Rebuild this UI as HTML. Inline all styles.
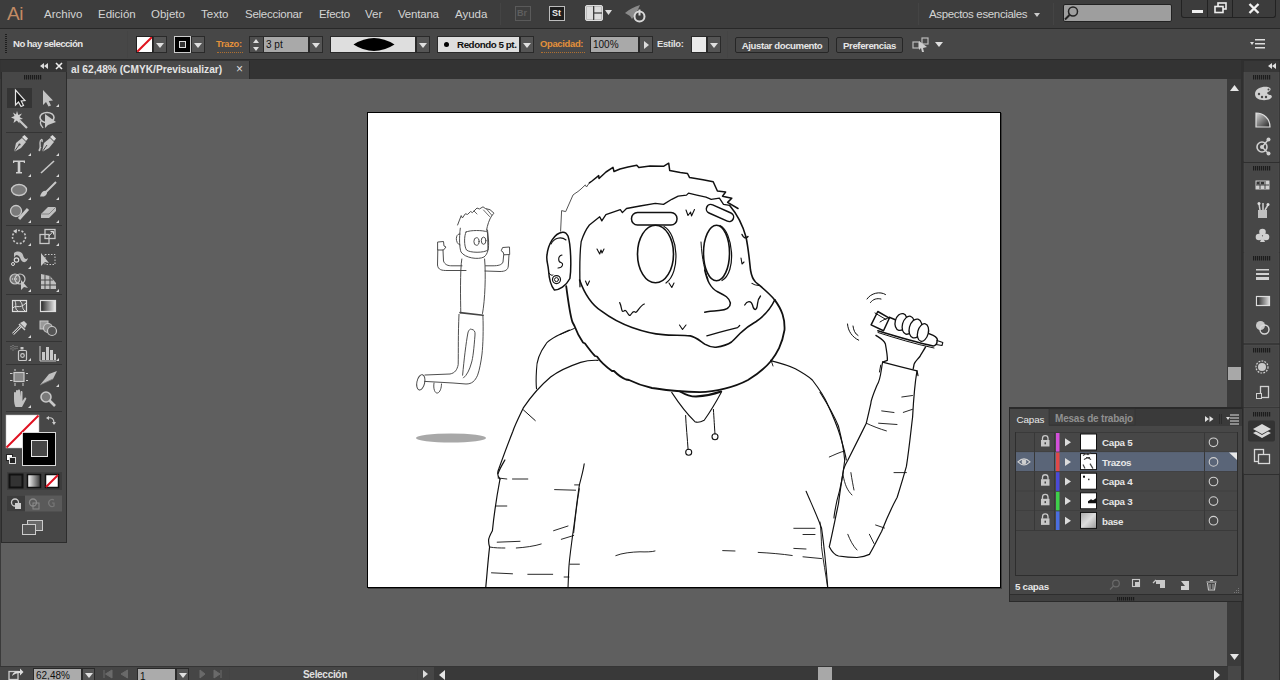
<!DOCTYPE html>
<html><head><meta charset="utf-8">
<style>
*{margin:0;padding:0;box-sizing:border-box}
html,body{width:1280px;height:680px;overflow:hidden;background:#5f5f5f;font-family:"Liberation Sans",sans-serif}
div,span,svg{position:absolute}
#menubar{left:0;top:0;width:1280px;height:28px;background:#3d3d3d}
#ctrl{left:0;top:28px;width:1280px;height:32px;background:#474747;border-top:1px solid #282828;border-bottom:1px solid #2a2a2a}
#tabbar{left:0;top:60px;width:1242px;height:19px;background:#333333}
#canvas{left:0;top:79px;width:1227px;height:587px;background:#5f5f5f;border-left:1px solid #3a3a3a}
#status{left:0;top:666px;width:434px;height:14px;background:#464646;border-top:1px solid #353535}
#hscroll{left:434px;top:666px;width:794px;height:14px;background:#393939;border-top:1px solid #353535}
#toolbar{left:1px;top:60px;width:66px;height:483px;background:#474747;border:1px solid #2c2c2c}
#vscroll{left:1227px;top:79px;width:14px;height:587px;background:#3b3b3b}
#dock{left:1241px;top:60px;width:39px;height:620px;background:#2e2e2e}
#artboard{left:367px;top:112px;width:634px;height:476px;background:#fff;border:1px solid #000;box-shadow:1px 1px 0 rgba(0,0,0,.35)}
#layers{left:1009px;top:407px;width:234px;height:195px;background:#474747;border:1px solid #252525}
.mt{color:#d4d4d4;font-size:11.5px;top:8px;white-space:nowrap}
.sep{width:1px;background:#2a2a2a;border-right:1px solid #444}
.lbl{font-size:10px;white-space:nowrap}
.inp{background:#d5d5d5;border:1px solid #2a2a2a}
.dd{background:#555;border:1px solid #2a2a2a}
.tri{width:0;height:0;border-left:4px solid transparent;border-right:4px solid transparent;border-top:5px solid #e0e0e0}
.btn{background:#484848;border:1px solid #262626;border-radius:2px;color:#e6e6e6;font-size:9.6px;font-weight:bold;letter-spacing:-0.4px;white-space:nowrap;text-align:center;line-height:15px}
</style></head><body>
<div id="canvas"></div>
<div id="menubar">
  <span style="left:7px;top:3px;font-size:19px;color:#c38b64;letter-spacing:-0.5px">Ai</span>
  <span class="mt" style="left:44px">Archivo</span>
  <span class="mt" style="left:98px">Edición</span>
  <span class="mt" style="left:151px">Objeto</span>
  <span class="mt" style="left:201px">Texto</span>
  <span class="mt" style="left:245px;letter-spacing:-0.25px">Seleccionar</span>
  <span class="mt" style="left:319px;letter-spacing:-0.3px">Efecto</span>
  <span class="mt" style="left:365px">Ver</span>
  <span class="mt" style="left:398px;letter-spacing:-0.2px">Ventana</span>
  <span class="mt" style="left:455px">Ayuda</span>
  <div class="sep" style="left:500px;top:3px;height:22px"></div>
  <div class="sep" style="left:918px;top:3px;height:22px"></div>
  <div class="sep" style="left:1053px;top:3px;height:22px"></div>
  <span class="mt" style="left:929px;letter-spacing:-0.35px">Aspectos esenciales</span>
  <div class="tri" style="left:1034px;top:13px;border-width:3px 3px 0 3px;border-top:4px solid #ccc"></div>
  <div style="left:1063px;top:4px;width:109px;height:18px;background:#9e9e9e;border:1px solid #222;border-radius:2px"></div>
  <div style="left:1181px;top:0;width:95px;height:18px;background:#3c3c3c;border:1px solid #222;border-top:none;border-radius:0 0 3px 3px"></div>
  <div style="left:1207px;top:0;width:1px;height:18px;background:#222"></div>
  <div style="left:1232px;top:0;width:1px;height:18px;background:#222"></div>
  <div style="left:515px;top:6px;width:16px;height:15px;border:1px solid #5a5a5a;background:#3e3e3e"><span style="left:1px;top:1px;font-size:9px;font-weight:bold;color:#5e5e5e">Br</span></div>
  <div style="left:549px;top:6px;width:16px;height:15px;border:1px solid #bdbdbd;background:#1e1e1e"><span style="left:2px;top:1px;font-size:9px;font-weight:bold;color:#e8e8e8">St</span></div>
  <svg style="left:585px;top:5px" width="28" height="16" viewBox="0 0 28 16"><rect x="0.5" y="0.5" width="17" height="15" rx="1.5" fill="#bbb" stroke="#ddd"/><rect x="2" y="2" width="6" height="12" fill="#ddd"/><rect x="9.5" y="2" width="6.5" height="5.5" fill="#ddd"/><rect x="9.5" y="8.5" width="6.5" height="5.5" fill="#ddd"/><rect x="8.2" y="1" width="1" height="14" fill="#222"/><rect x="9" y="7.5" width="8" height="1" fill="#222"/><path d="M20 5 L27 5 L23.5 10Z" fill="#ddd"/></svg>
  <svg style="left:624px;top:4px" width="24" height="19" viewBox="0 0 24 19"><path d="M1 9 C6 5 10 3 16 1 C14 6 12 10 8 15 L6 12 Z" fill="#8a8a8a"/><circle cx="15.5" cy="12.5" r="5" fill="none" stroke="#d8d8d8" stroke-width="2"/><rect x="14.5" y="5.5" width="2" height="6" fill="#d8d8d8"/></svg>
  <svg style="left:1064px;top:5px" width="16" height="16" viewBox="0 0 16 16"><circle cx="9" cy="6.5" r="4.5" fill="none" stroke="#222" stroke-width="1.5"/><path d="M5.5 10 L1 14.5" stroke="#222" stroke-width="2"/></svg>
  <div style="left:1192px;top:10px;width:11px;height:3px;background:#f0f0f0"></div>
  <svg style="left:1214px;top:2px" width="14" height="12" viewBox="0 0 14 12"><rect x="4" y="1" width="8" height="6" fill="none" stroke="#eee" stroke-width="1.6"/><rect x="1" y="4.5" width="8" height="6" fill="#3c3c3c" stroke="#eee" stroke-width="1.6"/></svg>
  <svg style="left:1248px;top:3px" width="12" height="11" viewBox="0 0 12 11"><path d="M1.5 1 L10.5 10 M10.5 1 L1.5 10" stroke="#f2f2f2" stroke-width="2.4"/></svg>
</div>
<div id="ctrl">
  <div style="left:5px;top:5px;width:2px;height:20px;background:repeating-linear-gradient(#1e1e1e 0 1px,transparent 1px 2px)"></div>
  <span class="lbl" style="left:13px;top:9px;color:#e6e6e6;font-weight:bold;font-size:9.6px;letter-spacing:-0.55px">No hay selección</span>
  <div class="sep" style="left:127px;top:2px;height:27px"></div>
  <div style="left:136px;top:7px;width:17px;height:17px;background:#fff;border:1px solid #222;overflow:hidden"><div style="left:-3px;top:6px;width:22px;height:2px;background:#e0141e;transform:rotate(-45deg)"></div></div>
  <div class="dd" style="left:153px;top:7px;width:14px;height:17px"><div class="tri" style="left:2px;top:6px"></div></div>
  <div style="left:174px;top:7px;width:17px;height:17px;background:#000;border:1px solid #ccc"><div style="left:4px;top:4px;width:7px;height:7px;border:1.5px solid #ddd;background:#333"></div></div>
  <div class="dd" style="left:191px;top:7px;width:14px;height:17px"><div class="tri" style="left:2px;top:6px"></div></div>
  <span class="lbl" style="left:216px;top:9px;color:#e4913a;font-weight:bold;font-size:9.4px;letter-spacing:-0.3px">Trazo:</span>
  <div style="left:217px;top:23px;width:26px;height:1px;border-top:1px dotted #b07030"></div>
  <div class="dd" style="left:249px;top:7px;width:15px;height:17px;background:#4e4e4e"><div class="tri" style="left:3px;top:2px;border-top:none;border-bottom:4px solid #ddd;border-left-width:3.5px;border-right-width:3.5px"></div><div class="tri" style="left:3px;top:10px;border-top-width:4px;border-left-width:3.5px;border-right-width:3.5px"></div></div>
  <div class="inp" style="left:264px;top:7px;width:45px;height:17px;background:#a9a9a9;border-left:none"><span class="lbl" style="left:2px;top:2px;color:#111;font-size:10px">3 pt</span></div>
  <div class="dd" style="left:309px;top:7px;width:14px;height:17px"><div class="tri" style="left:2px;top:6px"></div></div>
  <div class="inp" style="left:330px;top:7px;width:86px;height:17px;background:#dedede"><svg style="left:22px;top:1px" width="42" height="13" viewBox="0 0 42 13"><path d="M0.5 6.5 Q21 -6.5 41.5 6.5 Q21 19.5 0.5 6.5Z" fill="#000"/></svg></div>
  <div class="dd" style="left:416px;top:7px;width:14px;height:17px"><div class="tri" style="left:2px;top:6px"></div></div>
  <div class="inp" style="left:437px;top:7px;width:83px;height:17px;background:#dedede"><div style="left:6px;top:5px;width:5px;height:5px;border-radius:50%;background:#000"></div><span class="lbl" style="left:19px;top:2px;color:#111;font-size:9.8px;font-weight:bold;letter-spacing:-0.45px">Redondo 5 pt.</span></div>
  <div class="dd" style="left:520px;top:7px;width:14px;height:17px"><div class="tri" style="left:2px;top:6px"></div></div>
  <span class="lbl" style="left:540px;top:9px;color:#e4913a;font-weight:bold;font-size:9.4px;letter-spacing:-0.3px">Opacidad:</span>
  <div style="left:541px;top:23px;width:44px;height:1px;border-top:1px dotted #b07030"></div>
  <div class="inp" style="left:590px;top:7px;width:49px;height:17px;background:#a9a9a9"><span class="lbl" style="left:2px;top:2px;color:#111;font-size:10px">100%</span></div>
  <div class="dd" style="left:639px;top:7px;width:14px;height:17px"><div class="tri" style="left:4px;top:4px;border-top:4px solid transparent;border-bottom:4px solid transparent;border-left:5px solid #ddd;border-right:none"></div></div>
  <span class="lbl" style="left:657px;top:9px;color:#e0e0e0;font-weight:bold;font-size:9.4px;letter-spacing:-0.3px">Estilo:</span>
  <div style="left:691px;top:7px;width:16px;height:17px;background:#eaeaea;border:1px solid #2a2a2a"></div>
  <div class="dd" style="left:707px;top:7px;width:14px;height:17px"><div class="tri" style="left:2px;top:6px"></div></div>
  <div class="sep" style="left:727px;top:2px;height:27px"></div>
  <div class="btn" style="left:735px;top:8px;width:94px;height:16px">Ajustar documento</div>
  <div class="btn" style="left:836px;top:8px;width:67px;height:16px">Preferencias</div>
  <svg style="left:912px;top:8px" width="18" height="16" viewBox="0 0 18 16"><rect x="1" y="5" width="6" height="6" fill="none" stroke="#bbb" stroke-width="1.2"/><rect x="10" y="1" width="6" height="6" fill="none" stroke="#bbb" stroke-width="1.2"/><path d="M7 4 L15 10 L11 11 L12 15 L10 15 L9 11 L7 13Z" fill="#ccc"/></svg>
  <div class="tri" style="left:935px;top:13px"></div>
  <svg style="left:1250px;top:10px" width="15" height="10" viewBox="0 0 15 10"><path d="M0 3 L4 3 L2 6Z" fill="#ddd"/><rect x="5" y="0" width="10" height="1.5" fill="#ddd"/><rect x="5" y="4" width="10" height="1.5" fill="#ddd"/><rect x="5" y="8" width="10" height="1.5" fill="#ddd"/></svg>
</div>
<div id="tabbar">
  <div style="left:67px;top:1px;width:183px;height:18px;background:#494949;border-right:1px solid #2a2a2a"></div>
  <span style="left:71px;top:4px;font-size:10.2px;font-weight:bold;color:#e4e4e4;white-space:nowrap">al 62,48% (CMYK/Previsualizar)</span>
  <span style="left:236px;top:2px;font-size:12px;color:#ddd">×</span>
</div>
<div id="vscroll"></div>
<div id="status">
  <svg style="left:8px;top:1px" width="16" height="12" viewBox="0 0 16 12"><rect x="1" y="3.5" width="9" height="8" fill="none" stroke="#ccc" stroke-width="1.3"/><path d="M4 8 C5 4 8 3 12 3 L12 0.5 L15.5 4 L12 7.5 L12 5 C9 5 6 6 4 8Z" fill="#ddd"/></svg>
  <div style="left:33px;top:1px;width:49px;height:14px;background:#ababab;border:1px solid #2a2a2a"><span style="left:2px;top:1px;font-size:10px;color:#111">62,48%</span></div>
  <div class="dd" style="left:82px;top:1px;width:13px;height:14px"><div class="tri" style="left:2px;top:4px;border-top-width:5px;border-left-width:4px;border-right-width:4px"></div></div>
  <svg style="left:100px;top:1px" width="130" height="13" viewBox="100 667 130 13"><path d="M104 669 V677 M112 669 L105.5 673 L112 677Z M127.5 669 L121 673 L127.5 677Z" fill="#6a6a6a" stroke="#6a6a6a" stroke-width="1"/><path d="M200 669 L205 673 L200 677Z M214 669 L220 673 L214 677Z M221 669 V677" fill="#6a6a6a" stroke="#6a6a6a" stroke-width="1"/></svg>
  <div style="left:137px;top:1px;width:39px;height:14px;background:#ababab;border:1px solid #2a2a2a"><span style="left:2px;top:2px;font-size:10px;color:#111">1</span></div>
  <div class="dd" style="left:176px;top:1px;width:13px;height:14px"><div class="tri" style="left:2px;top:4px;border-top-width:5px;border-left-width:4px;border-right-width:4px"></div></div>
  <div class="sep" style="left:229px;top:1px;height:13px"></div>
  <span style="left:303px;top:2px;font-size:10px;font-weight:bold;color:#e0e0e0;letter-spacing:-0.3px">Selección</span>
  <div class="sep" style="left:417px;top:1px;height:13px"></div>
  <div class="tri" style="left:423px;top:3px;border-top:4px solid transparent;border-bottom:4px solid transparent;border-left:5px solid #ddd;border-right:none"></div>
</div>
<div id="hscroll">
  <div class="tri" style="left:5px;top:3px;border-top:5px solid transparent;border-bottom:5px solid transparent;border-right:6px solid #e6e6e6;border-left:none"></div>
  <div style="left:384px;top:0px;width:14px;height:14px;background:#a8a8a8"></div>
  <div class="tri" style="left:780px;top:3px;border-top:5px solid transparent;border-bottom:5px solid transparent;border-left:6px solid #e6e6e6;border-right:none"></div>
</div>
<svg style="left:1227px;top:60px" width="53" height="620" viewBox="1227 60 53 620">
<defs><linearGradient id="gr3" x1="0" x2="1"><stop offset="0" stop-color="#222"/><stop offset="1" stop-color="#ddd"/></linearGradient>
<linearGradient id="gr4" x1="0" y1="0" x2="1" y2="1"><stop offset="0" stop-color="#d8d8d8"/><stop offset="1" stop-color="#222"/></linearGradient></defs>
<path d="M1230 91 L1234.5 85 L1239 91Z" fill="#e6e6e6"/>
<rect x="1228" y="367" width="13" height="13" fill="#a8a8a8"/>
<path d="M1230 654 L1239 654 L1234.5 660Z" fill="#e6e6e6"/>
<rect x="1241" y="60" width="39" height="620" fill="#2f2f2f"/>
<rect x="1244" y="61" width="35" height="11" fill="#373737"/>
<path d="M1268 66 L1272 63 L1272 69Z M1272 66 L1276 63 L1276 69Z" fill="#e0e0e0"/>
<g fill="#474747" stroke="#555" stroke-width="0.5">
<rect x="1244" y="72.5" width="35" height="89"/>
<rect x="1244" y="163.5" width="35" height="89"/>
<rect x="1244" y="253.5" width="35" height="89.5"/>
<rect x="1244" y="345" width="35" height="62"/>
<rect x="1244" y="408.5" width="35" height="65"/>
</g>
<rect x="1244" y="475" width="35" height="205" fill="#474747"/>
<g fill="#1c1c1c"><rect x="1253" y="75" width="1.2" height="4.5"/><rect x="1255" y="75" width="1.2" height="4.5"/><rect x="1257" y="75" width="1.2" height="4.5"/><rect x="1259" y="75" width="1.2" height="4.5"/><rect x="1261" y="75" width="1.2" height="4.5"/><rect x="1263" y="75" width="1.2" height="4.5"/><rect x="1265" y="75" width="1.2" height="4.5"/><rect x="1267" y="75" width="1.2" height="4.5"/><rect x="1269" y="75" width="1.2" height="4.5"/><rect x="1253" y="166" width="1.2" height="4.5"/><rect x="1255" y="166" width="1.2" height="4.5"/><rect x="1257" y="166" width="1.2" height="4.5"/><rect x="1259" y="166" width="1.2" height="4.5"/><rect x="1261" y="166" width="1.2" height="4.5"/><rect x="1263" y="166" width="1.2" height="4.5"/><rect x="1265" y="166" width="1.2" height="4.5"/><rect x="1267" y="166" width="1.2" height="4.5"/><rect x="1269" y="166" width="1.2" height="4.5"/><rect x="1253" y="256" width="1.2" height="4.5"/><rect x="1255" y="256" width="1.2" height="4.5"/><rect x="1257" y="256" width="1.2" height="4.5"/><rect x="1259" y="256" width="1.2" height="4.5"/><rect x="1261" y="256" width="1.2" height="4.5"/><rect x="1263" y="256" width="1.2" height="4.5"/><rect x="1265" y="256" width="1.2" height="4.5"/><rect x="1267" y="256" width="1.2" height="4.5"/><rect x="1269" y="256" width="1.2" height="4.5"/><rect x="1253" y="348" width="1.2" height="4.5"/><rect x="1255" y="348" width="1.2" height="4.5"/><rect x="1257" y="348" width="1.2" height="4.5"/><rect x="1259" y="348" width="1.2" height="4.5"/><rect x="1261" y="348" width="1.2" height="4.5"/><rect x="1263" y="348" width="1.2" height="4.5"/><rect x="1265" y="348" width="1.2" height="4.5"/><rect x="1267" y="348" width="1.2" height="4.5"/><rect x="1269" y="348" width="1.2" height="4.5"/><rect x="1253" y="412" width="1.2" height="4.5"/><rect x="1255" y="412" width="1.2" height="4.5"/><rect x="1257" y="412" width="1.2" height="4.5"/><rect x="1259" y="412" width="1.2" height="4.5"/><rect x="1261" y="412" width="1.2" height="4.5"/><rect x="1263" y="412" width="1.2" height="4.5"/><rect x="1265" y="412" width="1.2" height="4.5"/><rect x="1267" y="412" width="1.2" height="4.5"/><rect x="1269" y="412" width="1.2" height="4.5"/></g>
<!-- palette -->
<path d="M1255 94 C1255 88 1263 86 1268 87 C1272 88 1271 91 1268 92 C1266 93 1268 95 1270 95 C1272 95 1273 97 1270 99 C1266 101 1255 101 1255 94Z" fill="#d0d0d0"/>
<circle cx="1259" cy="94" r="1.2" fill="#474747"/><circle cx="1262" cy="97" r="1.2" fill="#474747"/><circle cx="1266" cy="97" r="1.2" fill="#474747"/><circle cx="1268.5" cy="89.5" r="1" fill="#474747"/>
<!-- gradient quarter -->
<path d="M1256 127 L1256 113 C1264 113 1270 119 1270 127Z" fill="url(#gr4)" stroke="#ddd" stroke-width="1.2"/>
<!-- color guide -->
<circle cx="1262" cy="147" r="5" fill="none" stroke="#d0d0d0" stroke-width="1.6"/><circle cx="1262" cy="147" r="2" fill="#d0d0d0"/>
<path d="M1262 147 L1268 140 M1262 147 L1268 153" stroke="#d0d0d0" stroke-width="1.4"/>
<circle cx="1268.5" cy="139.5" r="2" fill="#d0d0d0"/><circle cx="1268.5" cy="153.5" r="2" fill="#d0d0d0"/>
<!-- swatches -->
<rect x="1255.5" y="180.5" width="14" height="9" fill="#d0d0d0"/>
<path d="M1260 181 V189 M1265 181 V189 M1256 185 H1269" stroke="#474747" stroke-width="1"/>
<rect x="1256.5" y="181.5" width="3" height="3" fill="#333"/><rect x="1261" y="181.5" width="3" height="3" fill="#333"/>
<!-- brushes -->
<rect x="1258" y="210" width="9" height="8" fill="#c0c0c0"/>
<path d="M1260 210 L1259 204 M1263 210 L1263 203 M1265 210 L1268 205" stroke="#d0d0d0" stroke-width="1.5"/>
<circle cx="1259" cy="203.5" r="1.5" fill="#ddd"/><circle cx="1268" cy="204.5" r="1.5" fill="#ddd"/>
<!-- symbols club -->
<circle cx="1262.5" cy="232" r="3.3" fill="#d0d0d0"/><circle cx="1259" cy="237" r="3.3" fill="#d0d0d0"/><circle cx="1266" cy="237" r="3.3" fill="#d0d0d0"/>
<path d="M1262.5 236 L1260 242 H1265Z" fill="#d0d0d0"/>
<!-- stroke lines -->
<rect x="1256" y="269" width="13" height="1.5" fill="#d0d0d0"/><rect x="1256" y="273" width="13" height="2" fill="#d0d0d0"/><rect x="1256" y="277" width="13" height="3" fill="#d0d0d0"/>
<!-- gradient rect -->
<rect x="1256.5" y="296.5" width="13" height="9" fill="url(#gr3)" stroke="#ddd" stroke-width="1.2"/>
<!-- transparency -->
<circle cx="1260.5" cy="325.5" r="4.5" fill="#c8c8c8"/><circle cx="1264.5" cy="329.5" r="4.5" fill="none" stroke="#d8d8d8" stroke-width="1.4"/>
<!-- appearance -->
<circle cx="1262" cy="367" r="6" fill="none" stroke="#d0d0d0" stroke-width="1.2" stroke-dasharray="1.8 1.2"/><circle cx="1262" cy="367" r="4" fill="#c8c8c8"/>
<!-- transform -->
<rect x="1260.5" y="386.5" width="8" height="11" fill="none" stroke="#d0d0d0" stroke-width="1.3"/>
<rect x="1256.5" y="393.5" width="5" height="5" fill="#474747" stroke="#d0d0d0" stroke-width="1"/>
<!-- layers selected -->
<rect x="1248" y="420.5" width="27" height="21" rx="2" fill="#333"/>
<path d="M1253 429 L1262 424 L1271 429 L1262 434Z" fill="#d8d8d8"/>
<path d="M1253 433 L1256 431.5 L1262 435 L1268 431.5 L1271 433 L1262 438Z" fill="#d8d8d8"/>
<!-- artboards -->
<rect x="1254.5" y="449.5" width="9" height="12" fill="none" stroke="#d8d8d8" stroke-width="1.3"/>
<rect x="1258.5" y="454.5" width="11" height="9" fill="#474747" stroke="#d8d8d8" stroke-width="1.3"/>
<!-- status corner -->
<rect x="1228" y="666" width="13" height="14" fill="#474747"/>
</svg>

<div id="toolbar"></div>
<svg style="left:0;top:0" width="68" height="545" viewBox="0 0 68 545">
<defs><linearGradient id="gr1" x1="0" x2="1"><stop offset="0" stop-color="#222"/><stop offset="1" stop-color="#eee"/></linearGradient>
<linearGradient id="gr2" x1="0" x2="1"><stop offset="0" stop-color="#fff"/><stop offset="1" stop-color="#333"/></linearGradient></defs>
<rect x="1" y="60" width="66" height="12" fill="#353535"/>
<path d="M40 66 L44 63 L44 69Z M44 66 L48 63 L48 69Z" fill="#ddd"/>
<path d="M56 63 L62 69 M62 63 L56 69" stroke="#eee" stroke-width="1.6"/>
<g fill="#1c1c1c"><rect x="24" y="75" width="1.2" height="4.5"/><rect x="26" y="75" width="1.2" height="4.5"/><rect x="28" y="75" width="1.2" height="4.5"/><rect x="30" y="75" width="1.2" height="4.5"/><rect x="32" y="75" width="1.2" height="4.5"/><rect x="34" y="75" width="1.2" height="4.5"/><rect x="36" y="75" width="1.2" height="4.5"/><rect x="38" y="75" width="1.2" height="4.5"/><rect x="40" y="75" width="1.2" height="4.5"/></g>
<g fill="none" stroke="#343434" stroke-width="1">
<path d="M6 132.5 H62 M6 225.5 H62 M6 294.5 H62 M6 341.5 H62 M6 364.5 H62 M6 411.5 H62"/>
</g>
<rect x="7" y="88" width="25" height="20" fill="#343434"/>
<!-- row1 -->
<path d="M15.5 90 L15.5 105 L18.5 102 L21 106.5 L23.5 105.5 L21.2 101 L25 100.5Z" fill="#1a1a1a" stroke="#e6e6e6" stroke-width="1.2"/>
<path d="M43 90 L43 105 L46 102 L48.5 106.5 L51 105.5 L48.7 101 L53 100.5Z" fill="#c4c4c4"/>
<!-- row2 wand -->
<path d="M17 118 L27 128" stroke="#c8c8c8" stroke-width="2.2"/>
<path d="M17 111 L18.3 115 L22 113.5 L19.5 117 L23 119 L19 119.5 L19.5 123.5 L16.8 120.5 L13.5 123 L14.5 119 L11 117.5 L14.5 116 L13 112.5 L16 114.5Z" fill="#d0d0d0"/>
<!-- lasso -->
<ellipse cx="47" cy="117.5" rx="7" ry="5" fill="none" stroke="#c8c8c8" stroke-width="1.6"/>
<path d="M45 114 L45 128 L48 125 L56 122Z" fill="#c8c8c8"/>
<path d="M41 121 C39 124 42 126 43 128" fill="none" stroke="#c8c8c8" stroke-width="1.3"/>
<!-- row3 pen -->
<path d="M14 152 L16 143 L22 138 L26 142 L21 148Z" fill="#c8c8c8"/>
<path d="M22 137 L24.5 135 L28 138.5 L26 141Z" fill="#d8d8d8"/>
<path d="M14 152 L19 145" stroke="#474747" stroke-width="1"/><circle cx="19.5" cy="144.5" r="1.1" fill="#474747"/>
<path d="M42 152 L44 143 L50 138 L54 142 L49 148Z" fill="#c8c8c8"/>
<path d="M50 137 L52.5 135 L56 138.5 L54 141Z" fill="#d8d8d8"/>
<path d="M42 152 L47 145" stroke="#474747" stroke-width="1"/>
<path d="M41 147 C37 151 41 154 40 143 C40 139 43 138 42 142" fill="none" stroke="#c8c8c8" stroke-width="1.3"/>
<!-- row4 T -->
<path d="M13 160.5 H25 V163 H24 L23.5 162 H20.3 V172 H22 V173.5 H16 V172 H17.7 V162 H14.5 L14 163 H13Z" fill="#d0d0d0"/>
<path d="M41 173 L54 161" stroke="#c8c8c8" stroke-width="1.6"/>
<!-- row5 ellipse -->
<ellipse cx="19" cy="190" rx="7.5" ry="5.5" fill="#7a7a7a" stroke="#c8c8c8" stroke-width="1.3"/>
<path d="M46 192 L56 182" stroke="#c8c8c8" stroke-width="2"/>
<path d="M40 196.5 C41 193 43 190 46 191 C48 192 47 195 44 196.5Z" fill="#c8c8c8"/>
<!-- row6 blob brush -->
<circle cx="16" cy="211" r="5.5" fill="#7a7a7a" stroke="#c8c8c8" stroke-width="1.3"/>
<path d="M19 219 L28 209" stroke="#c8c8c8" stroke-width="3"/>
<path d="M41 214 L48 207 L56 207 L56 211 L49 218 L41 218Z" fill="#c0c0c0"/>
<path d="M41 214 L49 214 L56 207" fill="none" stroke="#777" stroke-width="0.8"/>
<!-- row7 rotate -->
<circle cx="19" cy="237" r="6.5" fill="none" stroke="#c8c8c8" stroke-width="1.6" stroke-dasharray="2 1.6"/>
<path d="M13 231 L17 229 L16.5 233.5Z" fill="#d0d0d0"/>
<rect x="40" y="234.5" width="9" height="9" fill="none" stroke="#c8c8c8" stroke-width="1.3"/>
<rect x="45" y="229.5" width="10" height="9" fill="none" stroke="#c8c8c8" stroke-width="1.3"/>
<path d="M49 236 L53 231.5 M50.5 231.5 H53.5 V234.5" stroke="#d8d8d8" stroke-width="1" fill="none"/>
<!-- row8 warp -->
<path d="M14 258 C16 252 20 256 21 260 C24 264 27 262 28 258 C26 260 24 259 23 255 C22 252 18 250 14 253Z" fill="#c0c0c0"/>
<circle cx="16.5" cy="260" r="2.2" fill="none" stroke="#ddd" stroke-width="1.2"/><circle cx="13" cy="264" r="1.5" fill="none" stroke="#ddd" stroke-width="1"/>
<path d="M41 253 L41 266 L45 262 L49 263Z" fill="#c8c8c8"/>
<rect x="45" y="254.5" width="10" height="10" fill="none" stroke="#c8c8c8" stroke-width="1" stroke-dasharray="1.5 1.5"/>
<!-- row9 shape builder -->
<circle cx="15" cy="279" r="5" fill="#777" stroke="#c8c8c8" stroke-width="1.2"/>
<circle cx="20" cy="279" r="5" fill="none" stroke="#c8c8c8" stroke-width="1.2"/>
<path d="M12 279 H18" stroke="#eee" stroke-width="1" stroke-dasharray="1 1"/>
<path d="M21 280 L21 290 L24 287 L28 288Z" fill="#c8c8c8"/>
<path d="M41 274 V289 H56 V283 L50 276Z" fill="#c0c0c0"/>
<path d="M45 275 V289 M50 276 V289 M41 280 H53 M41 285 H56" stroke="#474747" stroke-width="1"/>
<!-- row10 mesh -->
<rect x="12.5" y="300.5" width="14" height="11" fill="#555" stroke="#ddd" stroke-width="1.2"/>
<path d="M13 308 C16 304 19 310 26 303 M15 301 C17 305 14 309 18 311 M20 301 C24 305 21 308 25 311" fill="none" stroke="#ddd" stroke-width="1"/>
<rect x="40.5" y="300.5" width="15" height="11" fill="url(#gr1)" stroke="#ddd" stroke-width="1.2"/>
<!-- row11 eyedropper -->
<path d="M13 334 L21 326" stroke="#c8c8c8" stroke-width="2.6"/>
<path d="M13 334 L21 326" stroke="#474747" stroke-width="1"/>
<path d="M20 323 L24 321 L27 324 L25 328Z" fill="#d0d0d0"/>
<path d="M19 324 L25 330" stroke="#d0d0d0" stroke-width="1.5"/>
<rect x="40" y="321" width="8" height="8" fill="#999" stroke="#c8c8c8" stroke-width="1"/>
<circle cx="48" cy="328" r="4.5" fill="#888" stroke="#c8c8c8" stroke-width="1.2"/>
<circle cx="52" cy="331" r="4.5" fill="#555" stroke="#c8c8c8" stroke-width="1.2"/>
<!-- row12 sprayer -->
<rect x="18.5" y="350.5" width="8" height="10" rx="1" fill="none" stroke="#c8c8c8" stroke-width="1.2"/>
<circle cx="22.5" cy="355.5" r="1.8" fill="none" stroke="#c8c8c8" stroke-width="1.2"/>
<rect x="20.5" y="347" width="3" height="2.5" fill="#c8c8c8"/>
<path d="M11 346 V350 M13 345 V351 M15 346 V350 M17 346 V349" stroke="#aaa" stroke-width="0.8" stroke-dasharray="1 0.8"/>
<path d="M40 346 V361 H56" fill="none" stroke="#c8c8c8" stroke-width="1"/>
<rect x="42" y="352" width="3" height="8" fill="#c8c8c8"/><rect x="46" y="347" width="3" height="13" fill="#c8c8c8"/><rect x="50" y="350" width="3" height="10" fill="#c8c8c8"/><rect x="54" y="354" width="2" height="6" fill="#c8c8c8"/>
<!-- row13 artboard -->
<rect x="14" y="372.5" width="10" height="9" fill="#888" stroke="#ccc" stroke-width="1.2"/>
<path d="M15 369 V371 M23 369 V371 M15 383 V386 M23 383 V386 M10 373.5 H12.5 M26 373.5 H28 M10 380.5 H12.5 M26 380.5 H28" stroke="#ccc" stroke-width="1"/>
<path d="M40 385 L49 374 L57 371 L53 379Z" fill="#c0c0c0"/>
<path d="M40 385 L53 379" stroke="#777" stroke-width="0.8"/>
<!-- row14 hand -->
<path d="M14 399 L14 393 C14 391.5 16 391.5 16 393 L16 398 L16 391 C16 389.5 18 389.5 18 391 L18 397 L18 390.5 C18 389 20 389 20 390.5 L20 397 L20.5 392 C20.5 390.5 22.5 390.5 22.5 392 L22.5 401 L24.5 398 C25.5 397 27 398 26 399.5 L22 407 L15.5 407 C14.5 405 14 402 14 399Z" fill="#c0c0c0"/>
<circle cx="46" cy="397" r="5" fill="#7a7a7a" stroke="#c8c8c8" stroke-width="1.6"/>
<path d="M49.5 400.5 L55 406" stroke="#c8c8c8" stroke-width="2.6"/>
<!-- corner triangles -->
<g fill="#d8d8d8">
<path d="M59 104 L59 107 L56 107Z"/>
<path d="M31 153 L31 156 L28 156Z M59 153 L59 156 L56 156Z"/>
<path d="M31 174 L31 177 L28 177Z M59 174 L59 177 L56 177Z"/>
<path d="M31 197 L31 200 L28 200Z M59 197 L59 200 L56 200Z"/>
<path d="M31 220 L31 223 L28 223Z M59 220 L59 223 L56 223Z"/>
<path d="M31 243 L31 246 L28 246Z M59 243 L59 246 L56 246Z"/>
<path d="M31 266 L31 269 L28 269Z"/>
<path d="M31 289 L31 292 L28 292Z M59 289 L59 292 L56 292Z"/>
<path d="M31 335 L31 338 L28 338Z"/>
<path d="M31 358 L31 361 L28 361Z M59 358 L59 361 L56 361Z"/>
<path d="M59 384 L59 387 L56 387Z"/>
<path d="M31 405 L31 408 L28 408Z"/>
</g>
<!-- fill / stroke -->
<rect x="6" y="415" width="33" height="33" fill="#fff" stroke="#bbb" stroke-width="0.5"/>
<path d="M6.5 447.5 L38.5 415.5" stroke="#e01020" stroke-width="2"/>
<rect x="22.5" y="432.5" width="33" height="33" fill="#000" stroke="#d8d8d8" stroke-width="1"/>
<rect x="31.5" y="440.5" width="16" height="16" fill="#474747" stroke="#e8e8e8" stroke-width="1"/>
<path d="M48 418 C52 417 54 419 54 423" fill="none" stroke="#ccc" stroke-width="1.2"/>
<path d="M46 418 L49 416 L49 420Z M52 422 L56 422 L54 425Z" fill="#ccc"/>
<rect x="6.5" y="454.5" width="6" height="6" fill="#fff" stroke="#222" stroke-width="1"/>
<rect x="9.5" y="457.5" width="6" height="6" fill="#222" stroke="#ddd" stroke-width="1"/>
<rect x="7" y="472" width="55" height="18" fill="#3c3c3c"/>
<rect x="9.5" y="474.5" width="13" height="13" fill="#333" stroke="#111" stroke-width="2"/>
<rect x="27.5" y="474.5" width="13" height="13" fill="url(#gr2)" stroke="#111" stroke-width="1.5"/>
<rect x="45.5" y="474.5" width="13" height="13" fill="#fff" stroke="#111" stroke-width="1.5"/>
<path d="M46 487 L58 475" stroke="#e01020" stroke-width="2"/>
<rect x="7" y="495.5" width="55" height="16" fill="#5a5a5a"/>
<rect x="7" y="495.5" width="18" height="16" fill="#3c3c3c"/>
<circle cx="15" cy="502.5" r="3.5" fill="none" stroke="#ccc" stroke-width="1.3"/>
<rect x="15" y="503" width="6" height="6" fill="#ccc"/>
<circle cx="33" cy="502.5" r="3.5" fill="none" stroke="#8a8a8a" stroke-width="1.3"/>
<rect x="33" y="503" width="6" height="6" fill="none" stroke="#8a8a8a" stroke-width="1"/>
<path d="M54 500 A3.5 3.5 0 1 0 54 506 L54 503 L52 503" fill="none" stroke="#777" stroke-width="1.2"/>
<rect x="27.5" y="520.5" width="15" height="10" fill="#6a6a6a" stroke="#ccc" stroke-width="1"/>
<rect x="22.5" y="524.5" width="13" height="10" fill="#555" stroke="#ccc" stroke-width="1"/>
</svg>

<div id="artboard"></div>
<svg style="left:0;top:0" width="1280" height="680" viewBox="0 0 1280 680">
<defs><clipPath id="ab"><rect x="368" y="113" width="632" height="474"/></clipPath></defs>
<g clip-path="url(#ab)" fill="none" stroke="#1a1a1a" stroke-linecap="round" stroke-linejoin="round">
<!-- shadow -->
<ellipse cx="451" cy="438" rx="35" ry="4.5" fill="#a8a8a8" stroke="none"/>
<!-- small figure -->
<g stroke="#444" stroke-width="0.95">
<path d="M457.6 225 L461.2 215.6 L462.4 218 L465.3 213.8 L467.6 214.4 L470.6 211.5 L472.4 212.6 L477 208 L479.4 209 L483 206.8 L485.3 208.5 L490 209.7 L494 213.2 L491.8 215.6 C489 220 487.5 225 486.5 230.3"/>
<path d="M483.5 210 L489.5 216.5 M486.5 209 L492 215.5 M474 211 L477 214" stroke-width="0.8"/>
<path d="M460.3 228.2 C459 238 459.5 248 461 252 C465 258 478 260 484 257 C488 254 489 248 488.5 240 L487.5 230"/>
<path d="M460 234 C455 233 455 244 460 245"/>
<path d="M466 232 C470 230 483 230 487.5 232 L488 250 C484 253 470 253 466.5 250 C464 246 464 236 466 232Z"/>
<ellipse cx="476.5" cy="241.5" rx="2.6" ry="3.8"/>
<ellipse cx="483.6" cy="240.7" rx="2.3" ry="3.6"/>
<path d="M438 242 L443.5 241.5 L444 246 L446 247 L443.5 250 L438 250 Z"/>
<path d="M437.8 250 L437.5 265 C438 270 442 270.5 447 270.5 L466 270.5"/>
<path d="M443 250 L443.5 261 C445 265 448 265.8 452 265.8 L462 265.8"/>
<path d="M503 247.5 L509.5 247 L509.7 254.5 L504 254.8 L503 252 L501.5 251Z"/>
<path d="M509 254.7 L508.3 266 C508 270 505 271.5 500 271.5 L485 271"/>
<path d="M503.7 254.7 L503 262 C502 265 498 265.8 493 265.8 L485.5 265.8"/>
<path d="M461.8 259 C460 270 460.5 300 460.8 313"/>
<path d="M484.6 259 C486 275 485 300 482.5 313.5"/>
<path d="M460 312.6 L483 315.3" stroke-width="1.6"/>
<path d="M459 314.4 C458 335 458.5 350 458.2 364.7 C457 370 455 373 450 374 L425 375"/>
<path d="M482.9 315.3 C483.5 330 483 345 482 354 C481 362 479.5 370 477.6 375.2 C475 381 472 384 466 384 L453 383 L424.7 381.4"/>
<path d="M462.6 375.2 C464 360 466 343 467.9 333 C468.5 330 470.5 328.5 471.4 329.3 C474 329.5 475.5 331.5 475 335 C474 348 473 358 471.4 363 C469.5 370 467 375 463.5 377.9"/>
<ellipse cx="420.8" cy="382.3" rx="3.9" ry="7.8" transform="rotate(12 420.8 382.3)"/>
<path d="M434 383 C433 389 435 393.5 437.5 393 C440 392.5 441.5 388 441.5 384"/>
</g>
<!-- big guy: hair outer -->
<g stroke="#111" stroke-width="1.3">
<path d="M560.6 231.2 L561.6 210.6 L565.7 211.6 L573 195 L575 193.5 L578 191.5 L581 189 L585.3 184.9 L586.5 187 L589.4 182.8" stroke="#555" stroke-width="1"/>
<path d="M589.4 182.8 L592 181 L598.7 175.6 L599 178.5 L606 172 L613 167.4 L614 171.5 L620 169 L628 167 L636.8 165.3 L638.8 167.4 L650 166 L663.5 166.3 L668.7 163.2 L669.7 170.4 L680.3 172.5 L687.5 173.5 L689.6 177.6 L703 179.7 L713.2 181.8 L717.4 191 L725.6 192 L722.5 196.2 L731.8 198.2 L727.6 202.4 L738 208.5" stroke-width="1.5"/>
<!-- inner hairline -->
<path d="M580 286.8 C579.5 265 580 250 581.2 241.5 C584 233 587 228 589.4 225 L599.7 216.8 L601.8 220.9 L605.9 214.7 L620.3 209.6 L622.4 212.6 L626.5 208.5 L640 206 L655.3 203.4 L663.5 204.4 L671.8 199.3 L678.2 196.2 L686.5 195.1 L688.5 193.1 L696.8 195.1 L706 197.2 L711.2 199.3 L719.4 198.2 L723.5 204.4 L729.7 205.4" stroke-width="1.3"/>
<!-- face right side -->
<path d="M729.7 205.4 C737 214 743 226 746 237 C748.5 249 749.5 261 750.5 270 C751.5 276 752.5 279 755.5 282 C760 286 768 292 774.7 299.9" stroke-width="1.6"/>
<path d="M742 234.5 C743.5 238 746 239 748 236.5" stroke-width="1.4"/>
<path d="M752 283.4 C754 285 757 285.5 759.3 285.4" stroke-width="1.2"/>
<!-- ear -->
<path d="M562.6 232.2 C554 233 548 245 547 255 C546 260 548 264 548.5 270 C549 278 550 285 554.4 289.9 C559 290 566 286 569.9 278.5 C571.5 268 571 245 568 236 C566.5 233 564.5 232 562.6 232.2Z" stroke-width="1.5"/>
<path d="M551 244 C554 238 561 236 566 240" stroke-width="1.1"/>
<path d="M562 255 C557.5 256 558 262 561 262.5 C564 263.5 562.5 268 558 268" stroke-width="1.1"/>
<circle cx="556.5" cy="279.6" r="4" stroke-width="1.2"/>
<circle cx="556.5" cy="279.6" r="2" stroke-width="1"/>
<!-- eyebrows -->
<rect x="631.5" y="212.5" width="45.5" height="12.5" rx="6" stroke-width="1.5"/>
<rect x="705.5" y="208.5" width="29" height="9" rx="4.5" transform="rotate(24 720 213)" stroke-width="1.5"/>
<!-- eyes -->
<ellipse cx="655.5" cy="254" rx="18" ry="28.8" stroke-width="1.6"/>
<path d="M664 226.5 C678 234 681 272 666 283" stroke-width="1.2"/>
<ellipse cx="716.5" cy="253" rx="13" ry="27.8" stroke-width="1.6"/>
<path d="M720 225.5 C733 232 737 272 722 280.5" stroke-width="1.2"/>
<path d="M701 242 C702 260 705 272 708 279" stroke-width="1"/>
<!-- nose -->
<path d="M704.7 270 C707 280 710 288 718 292 C724 295 729 297 730.4 303 C730.5 308 726 310 719 310.5 C713 311 708 311.5 704.7 312.2" stroke-width="1.5"/>
<!-- face lower boundary -->
<path d="M579.6 280 C585 295 592 305 601.2 310.9 C612 319 622 324 632 327.4 C645 332 655 334 663 334.6 C672 335.5 682 335 690.3 335.9 C696 337 700 341 704.7 344.1 C709 346.5 712 347.5 716 347.2 C724 346 728 344.5 731.5 342 C736 338 739 334 741.8 331.8 C748 326 752 324 756.2 321.5 C764 316 770 310 774.7 300" stroke-width="1.6"/>
<path d="M706.8 335.9 C716 333 728 330 737.6 327.6 L739.7 325.5" stroke-width="1.2"/>
<!-- beard outer -->
<path d="M566.2 286.2 C568 300 570 315 572.4 322 L574.5 326 C577 333 580 338 583 342.5 L585 343.5 C589 349 592 353 595 356 L597 356.5 C600 361 605 366 612 371 L614 371 C618 375 622 378 626 379.5 L629 380 C636 383.5 643 386 652 388 L656 388.5 C668 390.5 686 392 700 392.2 C715 392 735 387 748 380 C758 374 766 367 771 361 C777 353 782 345 784.5 330 C785 318 782 310 774.7 299.9" stroke-width="1.8"/>
<!-- hair tufts -->
<path d="M597 249 L599.7 254 L601 250 L602 253 L604 249" stroke-width="1.1"/>
<path d="M585.5 281 L587.4 285.5 L589.5 281" stroke-width="1.1"/>
<path d="M669 283 L671.8 287.5 L674 283" stroke-width="1.1"/>
<path d="M686 210 L688 215.5 L690.6 212 L691.5 216 L694.5 209.5" stroke-width="1.1"/>
<path d="M741 258 L742 264 L744 262" stroke-width="1.1"/>
<path d="M619.7 302.6 C622 307 621 313 624 311 C626 309 627 313 629 315 C631 317 632 310 635 312 C637 314 640 305 644.4 304" stroke-width="1.2"/>
<path d="M679.5 325 L682.5 329.5 L686 325" stroke-width="1.1"/>
<path d="M744.7 305 C747 301 751 300 752.5 305 C753.5 310 756 311 757 307 C758 303 757 300 760.5 296" stroke-width="1.3"/>
<path d="M549 273 C550 275 552 276 553 275" stroke-width="1"/>
<!-- hood -->
<path d="M569.4 330 C558 335 548 340 545.9 344.1 C540 352 536.5 360 536.5 370 C536 378 536 384 536.5 388.8" stroke-width="1.1"/>
<!-- sweater shoulders -->
<path d="M560 334.6 L574.4 328.4" stroke-width="1"/>
<path d="M598 360.3 C590 360 585 361 580.6 362.4 C570 366 560 370 550.6 377 C540 386 530 398 523.5 407.6 C519 417 515 425 512.9 431.2 C507 446 502 460 498.8 468.8 C497 473 498 477 500 479" stroke-width="1.2"/>
<path d="M523.5 410 L535.3 420.6" stroke-width="1"/>
<path d="M770.6 360.6 C780 363 790 366 795.3 368.8 C803 373 808 376 812.3 380 C820 390 825 398 827.8 404.7 C833 416 837 425 840.1 435.6 C843 446 845 452 846.3 460" stroke-width="1.2"/>
<path d="M771 360 L773 366" stroke-width="0.9"/>
<!-- neck dip and hood V -->
<path d="M680 391.5 C686 395 690 396.6 696 396.6 C705 396 714 394 721.2 391.5" stroke-width="2"/>
<path d="M671.7 392.4 C678 402 688 415 694.9 421.7 C698 423 701 422 704.2 420.2 C710 412 716 402 721.2 392.4" stroke-width="1.1"/>
<path d="M685.6 415.5 C686 425 687.5 440 688.1 449.5" stroke-width="1"/>
<circle cx="688.7" cy="452.3" r="3" stroke-width="1.1"/>
<path d="M713.4 409.4 C714 418 714.5 428 715 434" stroke-width="1"/>
<circle cx="715" cy="436.8" r="3" stroke-width="1.1"/>
<!-- left arm (viewer left) -->
<path d="M504.9 460 C502 465 499 470 498.2 473.4 M500 479 C497 495 494 515 492.4 530.7 C490 535 488.6 538 488.6 540.3 C488.5 543 489 545 489.6 547 C488 560 487 575 485.7 588" stroke-width="1.2"/>
<g stroke-width="0.9">
<path d="M498 478 L506.8 479 M512.5 479 L527.8 479"/>
<path d="M496.3 506 L506.8 506"/>
<path d="M554.6 489.6 L575.6 490.2"/>
<path d="M553.6 530.7 L568 526"/>
<path d="M561.3 539.3 L573.7 535.5"/>
<path d="M489.6 547 C495 548 500 548 504.9 548 M516.3 548 C525 547.5 535 546 541.2 544"/>
<path d="M497.2 542.2 L520 541.3"/>
<path d="M491.5 572.8 L512.5 573.8 M527.8 574.3 L552.7 574.3"/>
<path d="M569.9 564.2 L579.4 564.2"/>
<path d="M564.1 577 L569 577"/>
<path d="M615.8 555.6 C622 553 632 552 640 551.8 C645 552 652 552 655 551"/>
<path d="M722.7 550.6 L735 551"/>
<path d="M758.2 552.4 C770 553 782 554 792.2 555.5"/>
<path d="M793.8 528.3 L815 528.3"/>
<path d="M803 534.5 L815 534.5"/>
<path d="M793.8 548.4 L806 549"/>
<path d="M803 556.8 L821.6 558.6"/>
</g>
<path d="M584.2 463.8 C583 472 581 478 579.4 484.9 C577 500 575 520 572.7 534.6 C571 548 569.5 558 568.9 567 C568.5 575 568.3 580 568 588" stroke-width="1.1"/>
<path d="M579.4 488.7 C577 502 575 520 573.7 532.7" stroke-width="0.9"/>
<path d="M574.6 484.9 L579.4 484.9" stroke-width="0.9"/>
<!-- right torso side -->
<path d="M806.1 491.2 C812 505 818 518 821.6 528.3 C824 545 826 565 827.8 588" stroke-width="1.1"/>
<!-- right arm -->
<path d="M882.6 362.2 C881 370 880.7 380 877.1 385 C873 395 870.9 400 870.9 403.1 C869 412 867 420 866.3 423.2 C860 436 853 450 847.8 460.2 C845 465 843.1 470 843.1 472.6 C841 485 839.5 495 838.5 503.5 C835 520 832 535 829.3 546.7 C832 552 835 555 838.5 556 C845 557 852 557.5 857 557.5 C862 557 866 556 869.4 554.4 C875 545 878 538 881.7 531.2 C888 515 893 505 897.2 497.3 C901 485 904 475 906.4 466.4 C909 450 911 430 912.6 417 C913.5 400 914.5 385 917 370.8" stroke-width="1.2"/>
<path d="M820 392.3 C828 405 834 415 838.5 426.3 C842 440 844 452 844.7 460.2 C843 475 840 490 837 500.4 C835 510 834 515 834 518" stroke-width="1.1"/>
<g stroke-width="0.9">
<path d="M866.3 423.2 C872 426 880 429 886.4 430.9"/>
<path d="M878.6 423.2 L897 424.5"/>
<path d="M881.7 410.9 L894 412.5"/>
<path d="M901.8 397 L912.5 395.5"/>
<path d="M903.3 412.4 L912.5 409.3"/>
<path d="M894 472.6 L906.4 472.6"/>
<path d="M875.6 525 L884.5 528"/>
<path d="M847.8 534.3 C850 540 853 546 857 550"/>
<path d="M869.4 534.3 L874 543.5"/>
<path d="M829.3 457 C834 455 840 452 844.7 451"/>
<path d="M850.9 472.6 C852 480 853 485 854 490"/>
<path d="M843 475 C845 485 847 490 852 495"/>
<path d="M820 522 C821 530 821.5 540 821.5 546.7 C823 560 826 575 827.7 588"/>
</g>
<!-- hand -->
<path d="M875.9 335.4 C880 338 884 340 885.4 344 C886.5 350 887.5 356 887.4 360.3 L882.6 362.2" stroke-width="1.3"/>
<path d="M882.6 362.2 C893 365 905 368 917 370.8 L918 375.6" stroke-width="1.2"/>
<path d="M925.6 346.9 C924 350 921 354 919.9 356.5 C917 360 914.5 362 914.1 364.1 L913.2 368.9" stroke-width="1.3"/>
<path d="M880.7 365.1 L879.5 372" stroke-width="1"/>
<!-- mic -->
<path d="M877.8 311.5 L889.3 318.2 L883.5 330.7 L871.1 324.9Z" stroke-width="1.5" fill="#fff"/>
<path d="M875 313 L886 319.5 M880 322 C883 320 887 318 889 318" stroke-width="1"/>
<path d="M889.3 317.3 L933.2 335.4 C937 337 938 340 937 341.2 M877.8 330.7 C895 336 915 342 933.2 346 C935 346 937 344 937 342" stroke-width="1.5"/>
<path d="M878 332.5 C895 338 915 344 934 348" stroke-width="1"/>
<path d="M937 340.5 L942.8 342.5 L942 345.5 L936 344.5" stroke-width="1.1"/>
<ellipse cx="901" cy="322" rx="5.8" ry="8.6" transform="rotate(15 901 322)" fill="#fff" stroke-width="1.3"/>
<ellipse cx="908.2" cy="325.2" rx="5.8" ry="9.2" transform="rotate(15 908.2 325.2)" fill="#fff" stroke-width="1.3"/>
<ellipse cx="915.5" cy="328.5" rx="6.2" ry="9.6" transform="rotate(15 915.5 328.5)" fill="#fff" stroke-width="1.3"/>
<ellipse cx="923" cy="332.5" rx="5.3" ry="9" transform="rotate(15 923 332.5)" fill="#fff" stroke-width="1.3"/>
<!-- sound waves -->
<path d="M867 299 C871 293 880 291 885.5 294.5" stroke-width="1"/>
<path d="M870.5 302.5 C873 299 877 298 881 299" stroke-width="1"/>
<path d="M847.5 324 C848 331 852 337 858.7 340.2" stroke-width="1"/>
<path d="M853 326 C853.5 330 855 334 858 335.5" stroke-width="1"/>
</g>
</g>
</svg>

<svg style="left:1009px;top:407px" width="235" height="196" viewBox="1009 407 235 196">
<defs><linearGradient id="gb" x1="0" y1="0" x2="1" y2="1"><stop offset="0" stop-color="#aaa"/><stop offset="0.5" stop-color="#ddd"/><stop offset="1" stop-color="#999"/></linearGradient></defs>
<rect x="1009" y="407" width="234" height="195" fill="#2a2a2a"/>
<rect x="1010" y="409" width="232" height="17" fill="#3a3a3a"/>
<rect x="1010" y="409" width="39" height="18" fill="#474747"/>
<rect x="1049" y="409" width="86" height="16" fill="#3d3d3d" stroke="#333" stroke-width="0.6"/>
<rect x="1010" y="426" width="232" height="168" fill="#474747"/>
<rect x="1010" y="595" width="232" height="6" fill="#3f3f3f"/>
<rect x="1010" y="594" width="232" height="1" fill="#2e2e2e"/>
<rect x="1015.5" y="432.5" width="222" height="143" fill="#474747" stroke="#2e2e2e" stroke-width="1"/>
<path d="M1205 416 L1209 419 L1205 422Z M1209.5 416 L1213.5 419 L1209.5 422Z" fill="#e0e0e0"/>
<path d="M1219.5 414 V424 M1221.5 414 V424" stroke="#2c2c2c" stroke-width="1"/>
<path d="M1226 417 L1230 417 L1228 420Z" fill="#ddd"/><path d="M1230 415h9 M1230 418h9 M1230 421h9 M1230 424h9" stroke="#ddd" stroke-width="1"/>
<rect x="1016" y="432.5" width="221" height="19.6" fill="#474747"/>
<path d="M1016 452.1 H1237" stroke="#3a3a3a" stroke-width="1"/>
<path d="M1034.5 432.5 V452.1 M1054.5 432.5 V452.1 M1204.5 432.5 V452.1" stroke="#383838" stroke-width="1"/>
<path d="M1042.5 440.3 V438.3 A2.7 2.7 0 0 1 1048 438.3 V440.3" fill="none" stroke="#c8c8c8" stroke-width="1.3"/><rect x="1041" y="440.0" width="8.5" height="6.5" fill="#c8c8c8"/><rect x="1044.5" y="442.3" width="1.5" height="2" fill="#474747"/>
<rect x="1056" y="433.0" width="3.5" height="18.6" fill="#d34fd9"/>
<path d="M1065 438.3 L1071 442.3 L1065 446.3Z" fill="#dcdcdc"/>
<rect x="1080.5" y="434.0" width="16" height="16" fill="#fff" stroke="#111" stroke-width="1"/>
<circle cx="1213.5" cy="442.3" r="4.3" fill="none" stroke="#cfcfcf" stroke-width="1.1"/>
<text x="1102" y="446.1" font-family="Liberation Sans" font-size="9.8" font-weight="bold" fill="#e6e6e6" letter-spacing="-0.3">Capa 5</text>
<rect x="1016" y="452.1" width="221" height="19.6" fill="#5a6578"/>
<path d="M1016 471.7 H1237" stroke="#3a3a3a" stroke-width="1"/>
<path d="M1034.5 452.1 V471.7 M1054.5 452.1 V471.7 M1204.5 452.1 V471.7" stroke="#383838" stroke-width="1"/>
<path d="M1018 461.9 Q1024 455.9 1030 461.9 Q1024 467.9 1018 461.9Z" fill="none" stroke="#d0d0d0" stroke-width="1.2"/><circle cx="1024" cy="461.9" r="2.4" fill="#d0d0d0"/>
<rect x="1056" y="452.6" width="3.5" height="18.6" fill="#e04848"/>
<path d="M1065 457.9 L1071 461.9 L1065 465.9Z" fill="#dcdcdc"/>
<rect x="1080.5" y="453.6" width="16" height="16" fill="#fff" stroke="#111" stroke-width="1"/>
<path transform="translate(0 19.6)" d="M1083 436 l3 -2 l2 1 l3 -2 M1084 440 c2 -2 5 -2 7 0 M1083 445 l2 4 M1090 444 l3 5 M1086 438 h4" fill="none" stroke="#444" stroke-width="1.2"/>
<circle cx="1213.5" cy="461.9" r="4.3" fill="none" stroke="#cfcfcf" stroke-width="1.1"/>
<text x="1102" y="465.7" font-family="Liberation Sans" font-size="9.8" font-weight="bold" fill="#e6e6e6" letter-spacing="-0.3">Trazos</text>
<rect x="1016" y="471.7" width="221" height="19.6" fill="#474747"/>
<path d="M1016 491.3 H1237" stroke="#3a3a3a" stroke-width="1"/>
<path d="M1034.5 471.7 V491.3 M1054.5 471.7 V491.3 M1204.5 471.7 V491.3" stroke="#383838" stroke-width="1"/>
<path d="M1042.5 479.5 V477.5 A2.7 2.7 0 0 1 1048 477.5 V479.5" fill="none" stroke="#c8c8c8" stroke-width="1.3"/><rect x="1041" y="479.2" width="8.5" height="6.5" fill="#c8c8c8"/><rect x="1044.5" y="481.5" width="1.5" height="2" fill="#474747"/>
<rect x="1056" y="472.2" width="3.5" height="18.6" fill="#4a4ad8"/>
<path d="M1065 477.5 L1071 481.5 L1065 485.5Z" fill="#dcdcdc"/>
<rect x="1080.5" y="473.2" width="16" height="16" fill="#fff" stroke="#111" stroke-width="1"/>
<rect x="1083" y="475.7" width="2" height="2" fill="#111"/><rect x="1088" y="478.7" width="1.5" height="1.5" fill="#333"/>
<circle cx="1213.5" cy="481.5" r="4.3" fill="none" stroke="#cfcfcf" stroke-width="1.1"/>
<text x="1102" y="485.3" font-family="Liberation Sans" font-size="9.8" font-weight="bold" fill="#e6e6e6" letter-spacing="-0.3">Capa 4</text>
<rect x="1016" y="491.3" width="221" height="19.6" fill="#474747"/>
<path d="M1016 510.9 H1237" stroke="#3a3a3a" stroke-width="1"/>
<path d="M1034.5 491.3 V510.9 M1054.5 491.3 V510.9 M1204.5 491.3 V510.9" stroke="#383838" stroke-width="1"/>
<path d="M1042.5 499.1 V497.1 A2.7 2.7 0 0 1 1048 497.1 V499.1" fill="none" stroke="#c8c8c8" stroke-width="1.3"/><rect x="1041" y="498.8" width="8.5" height="6.5" fill="#c8c8c8"/><rect x="1044.5" y="501.1" width="1.5" height="2" fill="#474747"/>
<rect x="1056" y="491.8" width="3.5" height="18.6" fill="#3ed04a"/>
<path d="M1065 497.1 L1071 501.1 L1065 505.1Z" fill="#dcdcdc"/>
<rect x="1080.5" y="492.8" width="16" height="16" fill="#fff" stroke="#111" stroke-width="1"/>
<path d="M1088 501.3 L1091 499.3 L1093 500.3 L1096 498.3 L1096 503.3 L1088 503.3Z" fill="#111"/>
<circle cx="1213.5" cy="501.1" r="4.3" fill="none" stroke="#cfcfcf" stroke-width="1.1"/>
<text x="1102" y="504.9" font-family="Liberation Sans" font-size="9.8" font-weight="bold" fill="#e6e6e6" letter-spacing="-0.3">Capa 3</text>
<rect x="1016" y="510.9" width="221" height="19.6" fill="#474747"/>
<path d="M1016 530.5 H1237" stroke="#3a3a3a" stroke-width="1"/>
<path d="M1034.5 510.9 V530.5 M1054.5 510.9 V530.5 M1204.5 510.9 V530.5" stroke="#383838" stroke-width="1"/>
<path d="M1042.5 518.7 V516.7 A2.7 2.7 0 0 1 1048 516.7 V518.7" fill="none" stroke="#c8c8c8" stroke-width="1.3"/><rect x="1041" y="518.4" width="8.5" height="6.5" fill="#c8c8c8"/><rect x="1044.5" y="520.7" width="1.5" height="2" fill="#474747"/>
<rect x="1056" y="511.4" width="3.5" height="18.6" fill="#4a6ee0"/>
<path d="M1065 516.7 L1071 520.7 L1065 524.7Z" fill="#dcdcdc"/>
<rect x="1080.5" y="512.4" width="16" height="16" fill="url(#gb)" stroke="#111" stroke-width="1"/>
<circle cx="1213.5" cy="520.7" r="4.3" fill="none" stroke="#cfcfcf" stroke-width="1.1"/>
<text x="1102" y="524.5" font-family="Liberation Sans" font-size="9.8" font-weight="bold" fill="#e6e6e6" letter-spacing="-0.3">base</text>
<path d="M1229 452.6 L1237 452.6 L1237 460Z" fill="#e8e8e8"/>
<text x="1016.5" y="422.5" font-family="Liberation Sans" font-size="9.8" fill="#eaeaea" letter-spacing="-0.1">Capas</text>
<text x="1055" y="422" font-family="Liberation Sans" font-size="10" font-weight="bold" fill="#909090" letter-spacing="-0.2">Mesas de trabajo</text>
<text x="1015" y="590" font-family="Liberation Sans" font-size="9.8" font-weight="bold" fill="#e6e6e6" letter-spacing="-0.3">5 capas</text>
<circle cx="1116" cy="583.5" r="3.3" fill="none" stroke="#6a6a6a" stroke-width="1.2"/><path d="M1113.5 586 L1110 589.5" stroke="#6a6a6a" stroke-width="1.3"/>
<rect x="1132.5" y="579.5" width="7" height="7" fill="none" stroke="#c8c8c8" stroke-width="1.1"/><rect x="1135" y="582" width="5" height="5" fill="#c8c8c8"/>
<path d="M1156 580 L1165 580 L1165 588 L1160 588 L1160 584 L1156 584Z" fill="#c8c8c8"/><path d="M1156 580 L1153 583" stroke="#c8c8c8" stroke-width="1.2"/>
<path d="M1181 581 L1189 581 L1189 590 L1181 590 L1181 586 L1185 586Z" fill="#d0d0d0"/>
<path d="M1206.5 582 H1216.5 M1210 580.5 H1213" stroke="#c8c8c8" stroke-width="1.2"/><path d="M1207.5 583 L1208.5 590 H1214.5 L1215.5 583" fill="none" stroke="#c8c8c8" stroke-width="1.1"/><path d="M1210 584 V589 M1213 584 V589" stroke="#c8c8c8" stroke-width="0.8"/>
<g fill="#777"><rect x="1238" y="588" width="1" height="1"/><rect x="1236" y="590" width="1" height="1"/><rect x="1238" y="590" width="1" height="1"/><rect x="1234" y="592" width="1" height="1"/><rect x="1236" y="592" width="1" height="1"/><rect x="1238" y="592" width="1" height="1"/></g>
<g fill="#1c1c1c"><rect x="1117" y="597" width="1.2" height="3.5"/><rect x="1119" y="597" width="1.2" height="3.5"/><rect x="1121" y="597" width="1.2" height="3.5"/><rect x="1123" y="597" width="1.2" height="3.5"/><rect x="1125" y="597" width="1.2" height="3.5"/><rect x="1127" y="597" width="1.2" height="3.5"/><rect x="1129" y="597" width="1.2" height="3.5"/><rect x="1131" y="597" width="1.2" height="3.5"/><rect x="1133" y="597" width="1.2" height="3.5"/></g>
</svg>
</body></html>
